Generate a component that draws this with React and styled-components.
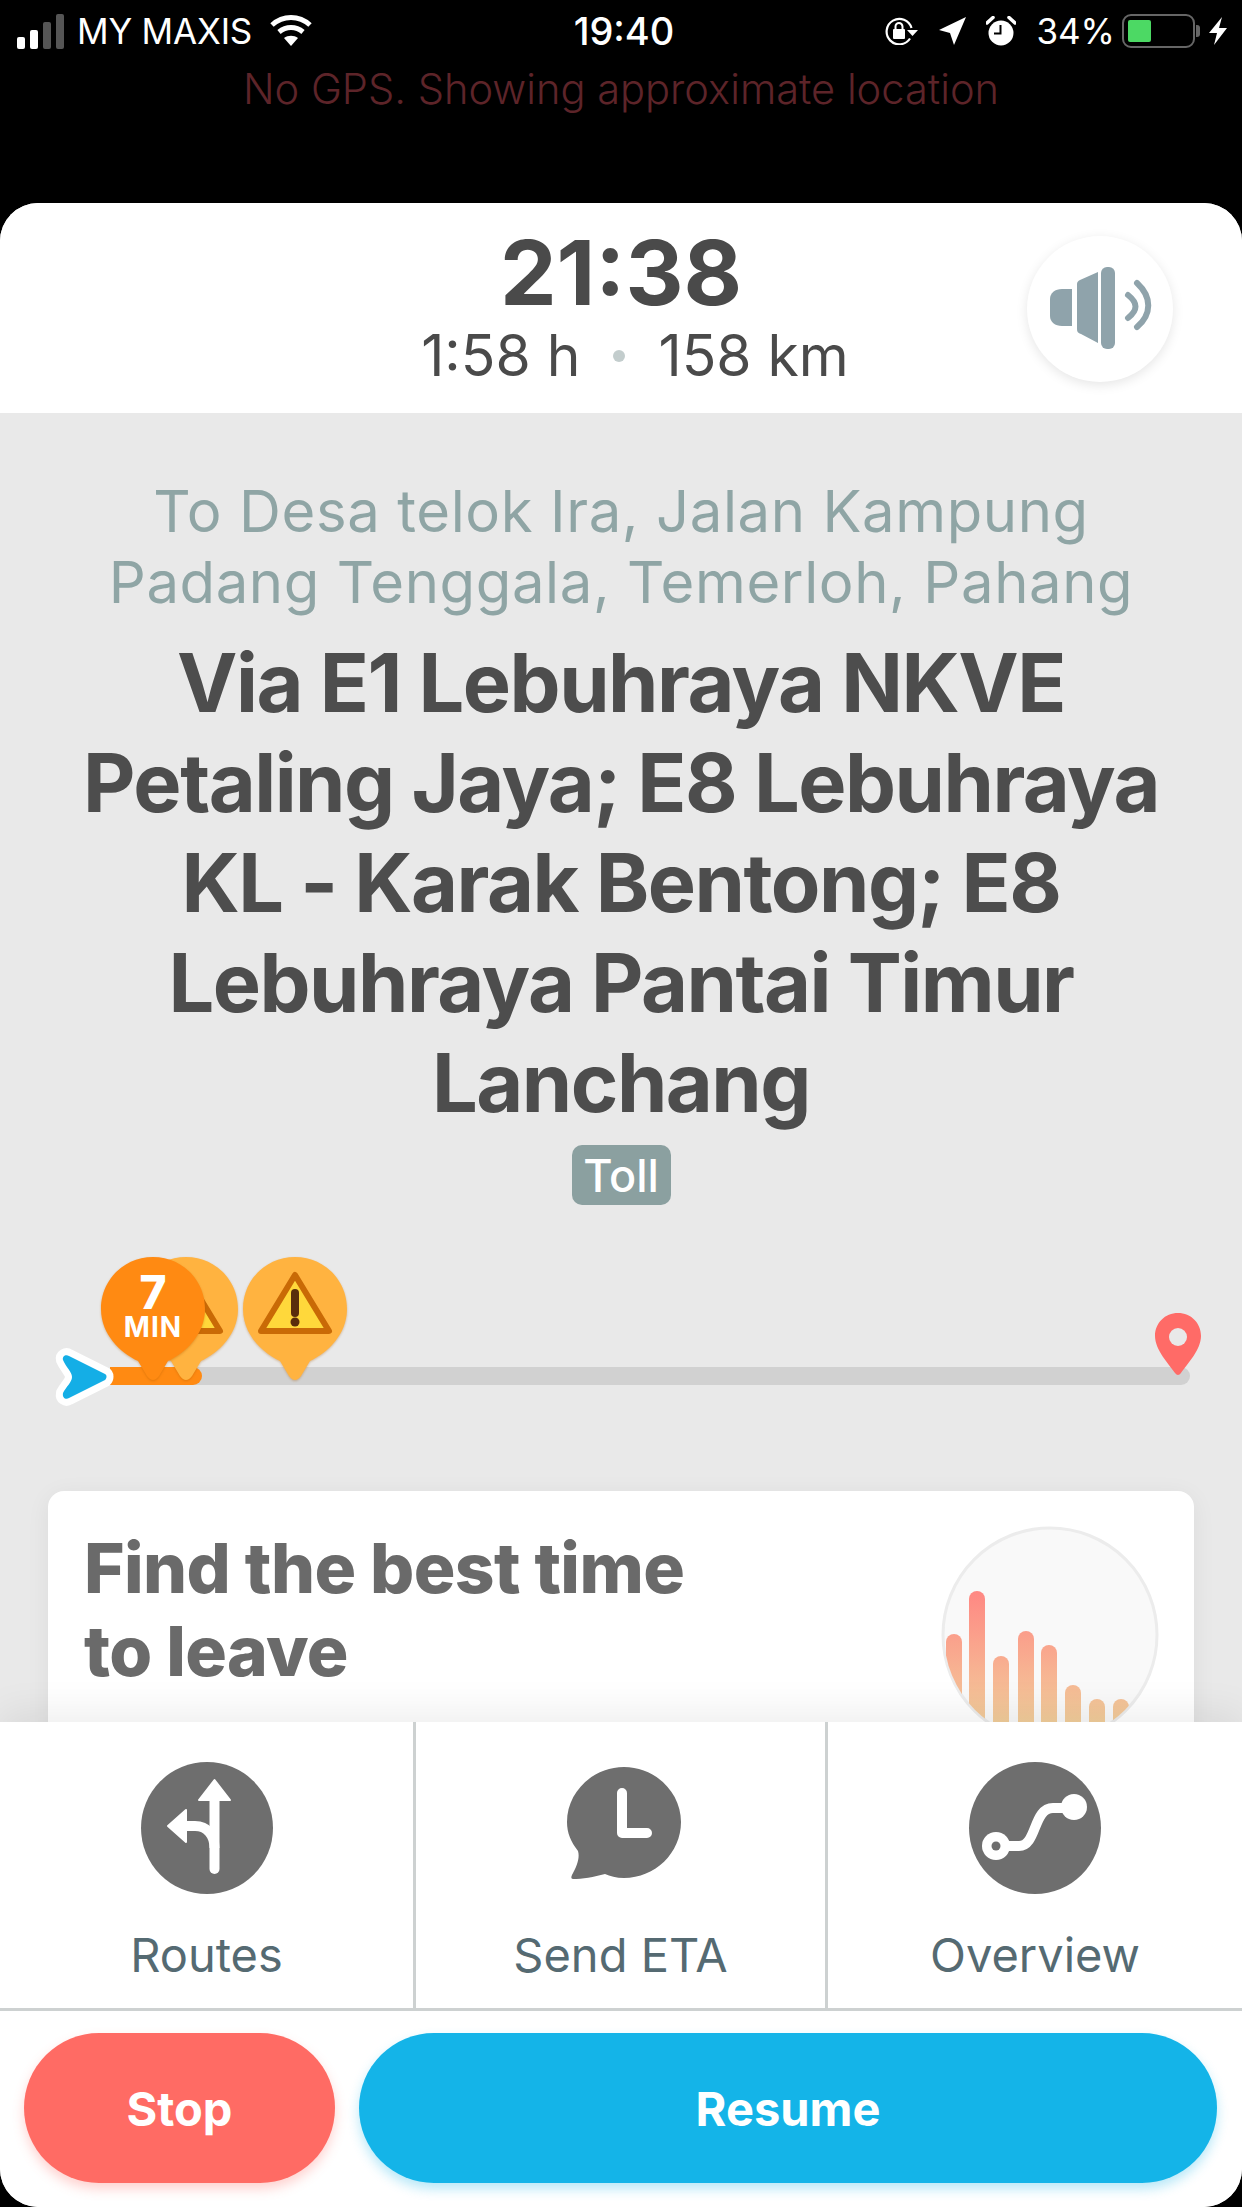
import React from "react";
import styled, { createGlobalStyle } from "styled-components";

const GlobalStyle = createGlobalStyle`
  html, body { margin: 0; padding: 0; background: #000; }
  * { box-sizing: border-box; }
`;

const FONT = "Inter, 'Noto Sans', sans-serif";

const Screen = styled.div`
  width: 1242px;
  height: 2207px;
  background: #000;
  font-family: ${FONT};
  display: flex;
  flex-direction: column;
  overflow: hidden;
`;

const TopArea = styled.div`
  height: 203px;
  flex: none;
  display: flex;
  flex-direction: column;
`;

const StatusBar = styled.div`
  height: 66px;
  padding-bottom: 4px;
  display: grid;
  grid-template-columns: 1fr auto 1fr;
  align-items: center;
  color: #fff;
  font-size: 35px;
`;

const StatusLeft = styled.div`
  display: flex;
  align-items: center;
  padding-left: 17px;
`;

const Carrier = styled.span`
  margin-left: 10px;
  margin-right: 18px;
  letter-spacing: -0.2px;
`;

const StatusRight = styled.div`
  display: flex;
  align-items: center;
  justify-content: flex-end;
  padding-right: 15px;
`;

const StatusGap = styled.span`
  width: ${({ $size }) => $size}px;
`;

const Clock = styled.span`
  font-weight: 500;
  font-size: 38px;
  margin-left: 6px;
`;

const Percent = styled.span`
  margin: 0 7px 0 20px;
`;

const Battery = styled.div`
  width: 73px;
  height: 34px;
  border: 2.5px solid #666;
  border-radius: 9px;
  padding: 4px;
`;

const BatteryLevel = styled.div`
  height: 100%;
  background: #4cd964;
  border-radius: 2px;
`;

const BatteryNub = styled.span`
  width: 4px;
  height: 12px;
  margin-left: 1px;
  border-radius: 0 3px 3px 0;
  background: #666;
`;

const GpsNotice = styled.div`
  text-align: center;
  color: #5d2429;
  font-size: 41.6px;
  font-weight: 300;
  line-height: 46px;
`;

const Sheet = styled.div`
  flex: 1;
  min-height: 0;
  background: #e9e9e9;
  border-radius: 38px;
  overflow: hidden;
  display: flex;
  flex-direction: column;
`;

const Header = styled.header`
  position: relative;
  flex: none;
  height: 210px;
  background: #fff;
  display: flex;
  flex-direction: column;
  align-items: center;
  color: #4a4a4a;
`;

const Arrival = styled.div`
  font-size: 90px;
  font-weight: 700;
  line-height: 96px;
  margin-top: 22px;
`;

const TripInfo = styled.div`
  display: flex;
  align-items: center;
  gap: 33px;
  margin-left: 28px;
  font-size: 57px;
  line-height: 69px;
  color: #4a4a4a;
`;

const Dot = styled.span`
  width: 12px;
  height: 12px;
  border-radius: 50%;
  background: #c3cdcd;
`;

const SoundButton = styled.button`
  position: absolute;
  left: 1027px;
  top: 33px;
  width: 146px;
  height: 146px;
  border: 0;
  padding: 0;
  border-radius: 50%;
  background: #fff;
  box-shadow: 0 3px 12px rgba(0, 0, 0, 0.1);
  display: flex;
  align-items: center;
  justify-content: center;
`;

const Scroll = styled.main`
  flex: 1;
  min-height: 0;
  overflow: hidden;
  padding-top: 63px;
  display: flex;
  flex-direction: column;
  align-items: center;
`;

const Destination = styled.div`
  flex: none;
  font-size: 58px;
  line-height: 71px;
  color: #8fa5a5;
  text-align: center;
  letter-spacing: 0.6px;
`;

const RouteName = styled.h1`
  flex: none;
  margin: 15px 0 0;
  font-size: 81px;
  line-height: 100px;
  font-weight: 700;
  color: #4d4d4d;
  text-align: center;
  letter-spacing: -1.5px;
`;

const Toll = styled.span`
  flex: none;
  margin-top: 12px;
  width: 99px;
  height: 60px;
  border-radius: 10px;
  background: #8ba0a0;
  color: #fff;
  font-size: 45px;
  font-weight: 500;
  display: flex;
  align-items: center;
  justify-content: center;
`;

const Route = styled.div`
  flex: none;
  position: relative;
  width: 100%;
  height: 148px;
  margin-top: 52px;
  padding: 110px 52px 0 110px;
`;

const Track = styled.div`
  height: 18px;
  border-radius: 0 9px 9px 0;
  background: #d1d1d1;
  overflow: hidden;
`;

const TrackFill = styled.div`
  height: 100%;
  border-radius: 0 9px 9px 0;
  background: #ff8a12;
`;

const Marker = styled.div`
  position: absolute;
  left: ${({ $left }) => $left}px;
  top: ${({ $top }) => $top}px;
  line-height: 0;
`;

const PinMarker = styled(Marker)`
  width: 104px;
  height: 124px;

  svg {
    filter: drop-shadow(0 1px 1px rgba(170, 90, 0, 0.35));
  }
`;

const EtaPin = styled(PinMarker)`
  color: #fff;
  text-align: center;
`;

const EtaValue = styled.div`
  position: absolute;
  left: 0;
  right: 0;
  top: 16px;
  font-size: 46px;
  line-height: 38px;
  font-weight: 800;
`;

const EtaUnit = styled.div`
  position: absolute;
  left: 0;
  right: 0;
  top: 58px;
  font-size: 28px;
  line-height: 24px;
  font-weight: 700;
  letter-spacing: 1px;
`;

const Card = styled.section`
  flex: none;
  width: 1146px;
  height: 340px;
  margin-top: 86px;
  padding: 36px;
  border-radius: 16px;
  background: #fff;
  position: relative;
  box-shadow: 0 4px 24px rgba(0, 0, 0, 0.06);
`;

const CardTitle = styled.h2`
  margin: 0;
  font-size: 69.4px;
  line-height: 83px;
  font-weight: 800;
  color: #6a6a6a;
  letter-spacing: -0.6px;
`;

const CardChart = styled.svg`
  position: absolute;
  left: 893px;
  top: 35px;
`;

const ActionPanel = styled.footer`
  flex: none;
  position: relative;
  height: 485px;
  background: #fff;
  box-shadow: 0 -10px 36px rgba(0, 0, 0, 0.07);
`;

const ActionRow = styled.div`
  display: grid;
  grid-template-columns: 416px 412px 1fr;
  height: 289px;
  border-bottom: 3px solid #cdd1d1;
`;

const Action = styled.div`
  display: flex;
  flex-direction: column;
  align-items: center;
  padding-top: 40px;
  border-right: ${({ $last }) => ($last ? "0" : "3px solid #cdd1d1")};
`;

const ActionIcon = styled.div`
  height: 132px;
  display: flex;
  align-items: center;
`;

const ActionLabel = styled.div`
  margin-top: 34px;
  font-size: 47px;
  line-height: 54px;
  color: #556a72;
`;

const ButtonRow = styled.div`
  display: flex;
  gap: 24px;
  padding: 22px 25px 0 24px;
`;

const PillButton = styled.button`
  flex: ${({ $grow }) => ($grow ? 1 : "none")};
  width: ${({ $grow }) => ($grow ? "auto" : "311px")};
  height: 150px;
  border: 0;
  border-radius: 75px;
  color: #fff;
  font-family: ${FONT};
  font-size: 47px;
  font-weight: 700;
  background: ${({ $color }) => $color};
  box-shadow: 0 6px 12px ${({ $shadow }) => $shadow};
`;

const PIN_PATH =
  "M52 0C81 0 104 23 104 52C104 78 84 96 67 104L58 119Q52 127 46 119L37 104C20 96 0 78 0 52C0 23 23 0 52 0Z";

const PinShape = ({ fill, children }) => (
  <svg width="104" height="124" viewBox="0 0 104 124">
    <path d={PIN_PATH} fill={fill} />
    {children}
  </svg>
);

const WarningPin = () => (
  <PinShape fill="#ffb340">
    <path d="M52 18L86 74H18Z" fill="#ffd83b" stroke="#c96a06" strokeWidth="6" strokeLinejoin="round" />
    <path d="M52 36V56" stroke="#5a2d0c" strokeWidth="8" strokeLinecap="round" />
    <circle cx="52" cy="65" r="4.5" fill="#5a2d0c" />
  </PinShape>
);

const SignalIcon = () => (
  <svg width="50" height="36" viewBox="0 0 50 36">
    <rect x="0" y="24" width="8" height="12" rx="2" fill="#fff" />
    <rect x="13" y="17" width="8" height="19" rx="2" fill="#fff" />
    <rect x="26" y="9" width="8" height="27" rx="2" fill="#555" />
    <rect x="39" y="1" width="8" height="35" rx="2" fill="#555" />
  </svg>
);

const WifiIcon = () => (
  <svg width="42" height="32" viewBox="0 0 42 32" fill="none" stroke="#fff" strokeWidth="5">
    <path d="M2 10C13 0 29 0 40 10" />
    <path d="M9 17C16 11 26 11 33 17" />
    <path d="M21 31L14 23C18 20 24 20 28 23Z" fill="#fff" stroke="none" />
  </svg>
);

const OrientationIcon = () => (
  <svg width="33" height="28" viewBox="0 0 33 28" fill="none" stroke="#fff">
    <path d="M25 21.500A12.700 12.700 0 1 1 26.500 11" strokeWidth="2.200" />
    <path d="M22 13H33L27.500 19Z" fill="#fff" stroke="none" />
    <rect x="8" y="12" width="12" height="10" rx="1" fill="#fff" stroke="none" />
    <path d="M10.500 12V9.500A3.500 3.500 0 0 1 17.500 9.500V12" strokeWidth="2" />
  </svg>
);

const LocationIcon = () => (
  <svg width="27" height="28" viewBox="0 0 27 28">
    <path d="M27 0L15 28L11 16L0 13Z" fill="#fff" />
  </svg>
);

const AlarmIcon = () => (
  <svg width="30" height="30" viewBox="0 0 30 30">
    <circle cx="15" cy="17" r="12.500" fill="#fff" />
    <path d="M14.500 9V17.500H8" stroke="#000" strokeWidth="2" fill="none" />
    <path d="M1 7L7 1.500M29 7L23 1.500" stroke="#fff" strokeWidth="3.500" strokeLinecap="round" />
  </svg>
);

const BoltIcon = () => (
  <svg width="18" height="28" viewBox="0 0 18 28">
    <path d="M13 0L0 16H8L5 28L18 11H10Z" fill="#fff" />
  </svg>
);

const SoundIcon = () => (
  <svg width="104" height="90" viewBox="0 0 104 90" fill="#8fa3ab">
    <path d="M24 25V62H14C7 62 2 58 2 52V35C2 29 7 25 14 25Z" />
    <path d="M29 20C29 18 30 17 32 16L50 8V79L33 70C30 69 29 68 29 65Z" />
    <rect x="53" y="3" width="14" height="82" rx="6" />
    <path d="M80 31C90 39 90 46 80 54" fill="none" stroke="#8fa3ab" strokeWidth="6" strokeLinecap="round" />
    <path d="M89 19C104 33 104 50 89 63" fill="none" stroke="#8fa3ab" strokeWidth="6" strokeLinecap="round" />
  </svg>
);

const RoutesIcon = () => (
  <svg width="132" height="132" viewBox="0 0 132 132">
    <circle cx="66" cy="66" r="66" fill="#6e6e6e" />
    <path d="M73.500 18L89 38H58Z" fill="#fff" stroke="#fff" strokeWidth="2" strokeLinejoin="round" />
    <path d="M73.500 36V107" stroke="#fff" strokeWidth="10" strokeLinecap="round" fill="none" />
    <path d="M44 64H54C66 64 73.500 73 73.500 86" stroke="#fff" strokeWidth="10" fill="none" />
    <path d="M27 64L45 48V80Z" fill="#fff" stroke="#fff" strokeWidth="2" strokeLinejoin="round" />
  </svg>
);

const SendEtaIcon = () => (
  <svg width="120" height="122" viewBox="-6 0 120 122">
    <path
      d="M57 0C88 0 114 25 114 55C114 86 88 111 57 111C49 111 43 109 38 107C27 110 15 112 6 112C4 112 4 110 5 108C10 99 13 91 11 84C4 75 0 66 0 55C0 25 26 0 57 0Z"
      fill="#6e6e6e"
    />
    <path d="M55 26V66H80" stroke="#fff" strokeWidth="10" strokeLinecap="round" strokeLinejoin="round" fill="none" />
  </svg>
);

const OverviewIcon = () => (
  <svg width="132" height="132" viewBox="0 0 132 132">
    <circle cx="66" cy="66" r="66" fill="#6e6e6e" />
    <path d="M27 84H50C68 84 64 46 84 46H105" stroke="#fff" strokeWidth="10" fill="none" />
    <circle cx="27" cy="84" r="14" fill="#fff" />
    <circle cx="27" cy="84" r="4.500" fill="#6e6e6e" />
    <circle cx="105" cy="45" r="13" fill="#fff" />
  </svg>
);

const bars = [
  { x: 5, top: 108 },
  { x: 28, top: 65 },
  { x: 52, top: 130 },
  { x: 77, top: 105 },
  { x: 100, top: 119 },
  { x: 124, top: 159 },
  { x: 148, top: 173 },
  { x: 172, top: 173 },
];

const App = () => {
  return (
    <>
      <GlobalStyle />
      <Screen>
        <TopArea>
          <StatusBar>
            <StatusLeft>
              <SignalIcon />
              <Carrier>MY MAXIS</Carrier>
              <WifiIcon />
            </StatusLeft>
            <Clock>19:40</Clock>
            <StatusRight>
              <OrientationIcon />
              <StatusGap $size={21} />
              <LocationIcon />
              <StatusGap $size={20} />
              <AlarmIcon />
              <Percent>34%</Percent>
              <Battery>
                <BatteryLevel style={{ width: 23 }} />
              </Battery>
              <BatteryNub />
              <StatusGap $size={9} />
              <BoltIcon />
            </StatusRight>
          </StatusBar>
          <GpsNotice>No GPS. Showing approximate location</GpsNotice>
        </TopArea>
        <Sheet>
          <Header>
            <Arrival>21:38</Arrival>
            <TripInfo>
              <span>1:58 h</span>
              <Dot />
              <span>158 km</span>
            </TripInfo>
            <SoundButton>
              <SoundIcon />
            </SoundButton>
          </Header>
          <Scroll>
            <Destination>
              To Desa telok Ira, Jalan Kampung
              <br />
              Padang Tenggala, Temerloh, Pahang
            </Destination>
            <RouteName>
              Via E1 Lebuhraya NKVE
              <br />
              Petaling Jaya; E8 Lebuhraya
              <br />
              KL - Karak Bentong; E8
              <br />
              Lebuhraya Pantai Timur
              <br />
              Lanchang
            </RouteName>
            <Toll>Toll</Toll>
            <Route>
              <Track>
                <TrackFill style={{ width: 92 }} />
              </Track>
              <Marker $left={1154} $top={56}>
                <svg width="48" height="64" viewBox="0 0 48 64">
                  <path
                    d="M24 0C37 0 47 10 47 23C47 37 33 51 27 60Q24 64 21 60C15 51 1 37 1 23C1 10 11 0 24 0Z"
                    fill="#ff6b67"
                  />
                  <circle cx="24" cy="24" r="9" fill="#e9e9e9" />
                </svg>
              </Marker>
              <PinMarker $left={134} $top={0}>
                <WarningPin />
              </PinMarker>
              <PinMarker $left={243} $top={0}>
                <WarningPin />
              </PinMarker>
              <EtaPin $left={101} $top={0}>
                <PinShape fill="#ff8a12" />
                <EtaValue>7</EtaValue>
                <EtaUnit>MIN</EtaUnit>
              </EtaPin>
              <Marker $left={52} $top={88}>
                <svg width="66" height="66" viewBox="0 0 66 66">
                  <path
                    d="M17 11C14 9 10 11 11 15C14 22 20 27 20 32C20 37 14 42 11 48C10 53 14 55 17 53L53 35C55 33 55 30 53 29Z"
                    fill="#14aee6"
                    stroke="#fff"
                    strokeWidth="14"
                    strokeLinejoin="round"
                    paintOrder="stroke"
                  />
                </svg>
              </Marker>
            </Route>
            <Card>
              <CardTitle>
                Find the best time
                <br />
                to leave
              </CardTitle>
              <CardChart width="218" height="218" viewBox="0 0 218 218">
                <defs>
                  <clipPath id="chartClip">
                    <circle cx="109" cy="109" r="106" />
                  </clipPath>
                  <linearGradient id="barFill" gradientUnits="userSpaceOnUse" x1="0" y1="60" x2="0" y2="200">
                    <stop offset="0" stopColor="#ff8582" />
                    <stop offset="1" stopColor="#f2d09c" />
                  </linearGradient>
                </defs>
                <circle cx="109" cy="109" r="107" fill="#f9f9f9" stroke="#ececec" strokeWidth="3" />
                <g clipPath="url(#chartClip)">
                  {bars.map((bar) => (
                    <rect key={bar.x} x={bar.x} y={bar.top} width="16" height="200" rx="8" fill="url(#barFill)" />
                  ))}
                </g>
              </CardChart>
            </Card>
          </Scroll>
          <ActionPanel>
            <ActionRow>
              <Action>
                <ActionIcon>
                  <RoutesIcon />
                </ActionIcon>
                <ActionLabel>Routes</ActionLabel>
              </Action>
              <Action>
                <ActionIcon>
                  <SendEtaIcon />
                </ActionIcon>
                <ActionLabel>Send ETA</ActionLabel>
              </Action>
              <Action $last>
                <ActionIcon>
                  <OverviewIcon />
                </ActionIcon>
                <ActionLabel>Overview</ActionLabel>
              </Action>
            </ActionRow>
            <ButtonRow>
              <PillButton $color="#ff6b64" $shadow="rgba(255, 107, 100, 0.3)">
                Stop
              </PillButton>
              <PillButton $grow $color="#14b4e8" $shadow="rgba(20, 180, 232, 0.3)">
                Resume
              </PillButton>
            </ButtonRow>
          </ActionPanel>
        </Sheet>
      </Screen>
    </>
  );
};

export default App;
